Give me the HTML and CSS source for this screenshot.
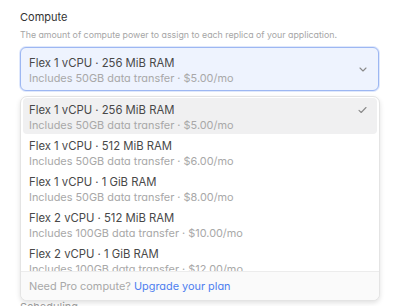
FILE: index.html
```html
<!DOCTYPE html>
<html lang="en">
<head>
    <title>Compute</title>
    <meta charset="utf-8">
    <link rel="stylesheet" href="styles.css">
</head>
<body>

    <div class="form">
        <div class="field">
            <div class="label">Compute</div>
            <div class="hint">The amount of compute power to assign to each replica of your application.</div>

            <div class="select-wrap">
                <button class="select open">
                    <span class="opt-text">
                        <span class="opt-title">Flex 1 vCPU · 256 MiB RAM</span>
                        <span class="opt-sub">Includes 50GB data transfer · $5.00/mo</span>
                    </span>
                    <svg class="chevron" width="8" height="5" viewBox="0 0 8 5">
                        <path d="M1 1l3 3 3-3" fill="none" stroke="#8a8a8a" stroke-width="1.1" stroke-linecap="round" stroke-linejoin="round"/>
                    </svg>
                </button>

                <!-- dropdown menu over the rest of the form -->
                <div class="menu">
                    <div class="options">
                        <div class="option selected">
                            <span class="opt-text">
                                <span class="opt-title">Flex 1 vCPU · 256 MiB RAM</span>
                                <span class="opt-sub">Includes 50GB data transfer · $5.00/mo</span>
                            </span>
                            <svg class="check" width="9" height="8" viewBox="0 0 9 8">
                                <path d="M1 4.3l2.2 2.2L8 1.5" fill="none" stroke="#8a8a8a" stroke-width="1.1" stroke-linecap="round" stroke-linejoin="round"/>
                            </svg>
                        </div>
                        <div class="option">
                            <span class="opt-text">
                                <span class="opt-title">Flex 1 vCPU · 512 MiB RAM</span>
                                <span class="opt-sub">Includes 50GB data transfer · $6.00/mo</span>
                            </span>
                        </div>
                        <div class="option">
                            <span class="opt-text">
                                <span class="opt-title">Flex 1 vCPU · 1 GiB RAM</span>
                                <span class="opt-sub">Includes 50GB data transfer · $8.00/mo</span>
                            </span>
                        </div>
                        <div class="option">
                            <span class="opt-text">
                                <span class="opt-title">Flex 2 vCPU · 512 MiB RAM</span>
                                <span class="opt-sub">Includes 100GB data transfer · $10.00/mo</span>
                            </span>
                        </div>
                        <div class="option">
                            <span class="opt-text">
                                <span class="opt-title">Flex 2 vCPU · 1 GiB RAM</span>
                                <span class="opt-sub">Includes 100GB data transfer · $12.00/mo</span>
                            </span>
                        </div>
                        <div class="option">
                            <span class="opt-text">
                                <span class="opt-title">Flex 2 vCPU · 2 GiB RAM</span>
                                <span class="opt-sub">Includes 100GB data transfer · $16.00/mo</span>
                            </span>
                        </div>
                    </div>
                    <div class="menu-footer">
                        Need Pro compute? <a href="#">Upgrade your plan</a>
                    </div>
                </div>
            </div>
        </div>

        <div class="field next">
            <div class="label">Scheduling</div>
        </div>
    </div>

</body>
</html>
```

FILE: styles.css
```css
html, body {
    height: 306px;
}
body {
    margin: 0;
    background: #fff;
    font-family: Inter, "Noto Sans", sans-serif;
    font-feature-settings: "cv11";
    color: #2f2f2f;
    overflow: hidden;
}
.form {
    padding: 10px 20px;
}
.label {
    font-size: 11px;
    line-height: 14px;
    color: #333;
}
.hint {
    margin-top: 4px;
    font-size: 8.8px;
    line-height: 14px;
    color: #a6a6a6;
}
.select-wrap {
    position: relative;
    margin-top: 5px;
}
.select {
    display: flex;
    align-items: center;
    justify-content: space-between;
    box-sizing: border-box;
    width: 100%;
    height: 44px;
    padding: 3px 11px 0 8px;
    border: 1px solid #9db7f2;
    border-radius: 6px;
    background: #eef3fe;
    font: inherit;
    text-align: left;
    box-shadow: 0 0 0 1px #dfe8fc;
}
.chevron {
    margin-top: -2px;
}
.opt-text {
    display: flex;
    flex-direction: column;
}
.opt-title {
    font-size: 11.3px;
    line-height: 15px;
    color: #484848;
}
.opt-sub {
    font-size: 10.9px;
    line-height: 15px;
    color: #a8a8a8;
}
.menu {
    position: absolute;
    top: 49px;
    left: 0;
    right: -1px;
    background: #fff;
    border: 1px solid #e4e4e4;
    border-radius: 7px;
    box-shadow: 0 2px 5px rgba(0, 0, 0, 0.12);
    overflow: hidden;
}
.options {
    height: 173px;
    overflow: hidden;
    padding: 1px 2px 0;
}
.option {
    display: flex;
    align-items: center;
    justify-content: space-between;
    box-sizing: border-box;
    height: 36px;
    padding: 3px 10px 0 6px;
    border-radius: 4px;
}
.option.selected {
    background: #f0f0f1;
}
.check {
    margin-top: -15px;
}
.menu-footer {
    height: 28px;
    padding: 0 8px;
    border-top: 1px solid #ececec;
    background: #fafafa;
    font-size: 10.9px;
    line-height: 28px;
    color: #a8a8a8;
}
.menu-footer a {
    color: #4d7ef0;
    text-decoration: none;
}
.next {
    margin-top: 209px;
}
.next .label {
    color: #a0a0a0;
}
```
